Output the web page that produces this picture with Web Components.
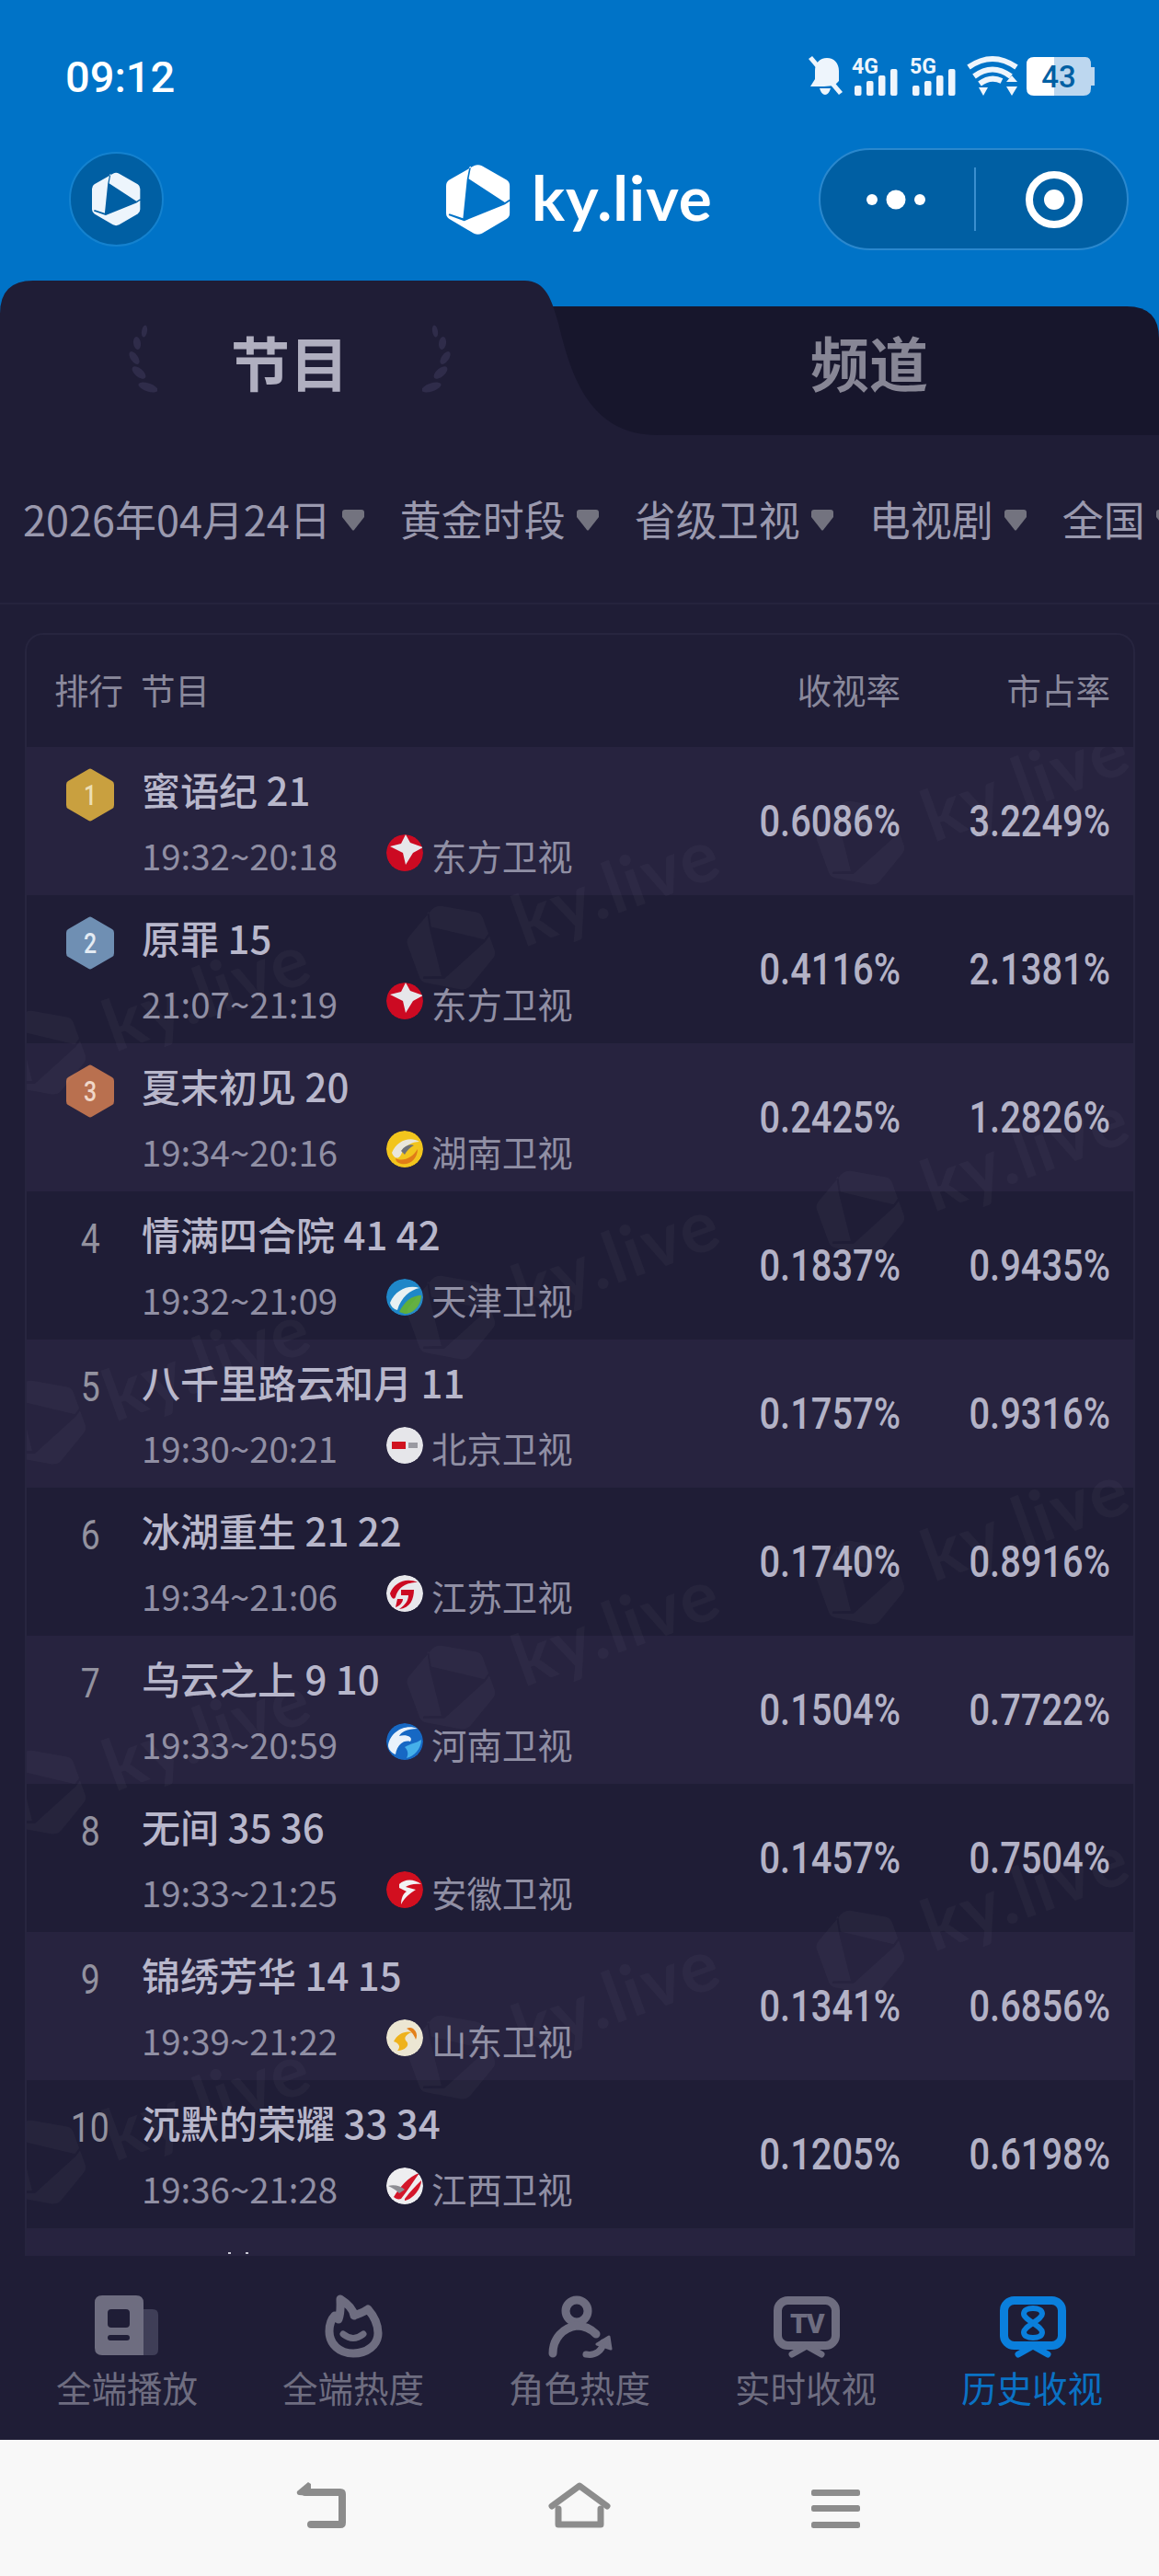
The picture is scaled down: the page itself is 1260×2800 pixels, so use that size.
<!DOCTYPE html>
<html lang="zh">
<head>
<meta charset="utf-8">
<title>ky.live</title>
<style>
  html, body { margin: 0; padding: 0; background: #1f1d36; }
  body { width: 1260px; height: 2800px; overflow: hidden; font-family: "Noto Sans CJK SC", "Noto Sans", sans-serif; }
  #app { display: flex; flex-direction: column; height: 2800px; }
  rating-table { flex: 1; min-height: 0; }
</style>
</head>
<body>
<div id="app">
  <app-header></app-header>
  <tab-switch></tab-switch>
  <filter-bar>
    <filter-chip>2026年04月24日</filter-chip>
    <filter-chip>黄金时段</filter-chip>
    <filter-chip>省级卫视</filter-chip>
    <filter-chip>电视剧</filter-chip>
    <filter-chip>全国</filter-chip>
  </filter-bar>
  <rating-table>
    <rating-row rank="1" logo="dongfang" time="19:32~20:18" channel="东方卫视" rate="0.6086%" share="3.2249%">蜜语纪 21</rating-row>
    <rating-row rank="2" logo="dongfang" time="21:07~21:19" channel="东方卫视" rate="0.4116%" share="2.1381%">原罪 15</rating-row>
    <rating-row rank="3" logo="hunan" time="19:34~20:16" channel="湖南卫视" rate="0.2425%" share="1.2826%">夏末初见 20</rating-row>
    <rating-row rank="4" logo="tianjin" time="19:32~21:09" channel="天津卫视" rate="0.1837%" share="0.9435%">情满四合院 41 42</rating-row>
    <rating-row rank="5" logo="beijing" time="19:30~20:21" channel="北京卫视" rate="0.1757%" share="0.9316%">八千里路云和月 11</rating-row>
    <rating-row rank="6" logo="jiangsu" time="19:34~21:06" channel="江苏卫视" rate="0.1740%" share="0.8916%">冰湖重生 21 22</rating-row>
    <rating-row rank="7" logo="henan" time="19:33~20:59" channel="河南卫视" rate="0.1504%" share="0.7722%">乌云之上 9 10</rating-row>
    <rating-row rank="8" logo="anhui" time="19:33~21:25" channel="安徽卫视" rate="0.1457%" share="0.7504%">无间 35 36</rating-row>
    <rating-row rank="9" logo="shandong" time="19:39~21:22" channel="山东卫视" rate="0.1341%" share="0.6856%">锦绣芳华 14 15</rating-row>
    <rating-row rank="10" logo="jiangxi" time="19:36~21:28" channel="江西卫视" rate="0.1205%" share="0.6198%">沉默的荣耀 33 34</rating-row>
    <rating-row blank></rating-row>
  </rating-table>
  <bottom-nav>
    <nav-item>
      <svg slot="icon" viewBox="0 0 80 72" width="80" height="72">
        <path fill="#3f3e57" d="M58 18H68Q74 18 74 24V62Q74 68 68 68H58Z"/>
        <path fill="#6e6d80" fill-rule="evenodd" d="M13 3H50Q58 3 58 11V68H13Q5 68 5 60V11Q5 3 13 3ZM23 18Q19 18 19 22V34Q19 38 23 38H39Q43 38 43 34V22Q43 18 39 18ZM22 46Q19 46 19 49T22 52H40Q43 52 43 49T40 46Z"/>
      </svg>
      全端播放
    </nav-item>
    <nav-item>
      <svg slot="icon" viewBox="0 0 80 72" width="80" height="72" fill="none" stroke="#6e6d80" stroke-linecap="round" stroke-linejoin="round">
        <path stroke-width="9" d="M26 7C34 12 40 18 41 25C46 23 52 21 56 18C63 26 67 34 67 44C67 57 55 66 40 66C25 66 14 56 14 42C14 34 17 28 20 25L24 29C27 21 26 13 26 7Z"/>
        <path stroke-width="7" d="M29 45Q40 54 51 45"/>
      </svg>
      全端热度
    </nav-item>
    <nav-item>
      <svg slot="icon" viewBox="0 0 80 72" width="80" height="72" fill="none" stroke="#6e6d80" stroke-linecap="round" stroke-linejoin="round" stroke-width="9">
        <circle cx="37" cy="20" r="12"/>
        <path d="M11 66C11 50 22 38 37 36C46 36 52 39 58 45"/>
        <path stroke-width="7" d="M47 67C57 69 65 63 66 54"/>
        <path fill="#6e6d80" stroke-width="3" d="M59 56L72 48L74 61Z"/>
      </svg>
      角色热度
    </nav-item>
    <nav-item>
      <svg slot="icon" viewBox="0 0 80 72" width="80" height="72" fill="none" stroke="#6e6d80" stroke-linejoin="round" stroke-width="9">
        <rect x="9.5" y="8.5" width="63" height="49" rx="11"/>
        <path stroke-width="7" stroke-linecap="round" d="M41 58L25 67M41 58L57 67"/>
        <text x="41" y="44" text-anchor="middle" font-family="Roboto" font-weight="900" font-size="30" letter-spacing="-1.5" fill="#6e6d80" stroke="none">TV</text>
      </svg>
      实时收视
    </nav-item>
    <nav-item active>
      <svg slot="icon" viewBox="0 0 80 72" width="80" height="72" fill="none" stroke="#0a7fdc" stroke-linejoin="round" stroke-width="9">
        <rect x="9.5" y="8.5" width="63" height="49" rx="11"/>
        <path stroke-width="7" stroke-linecap="round" d="M41 58L25 67M41 58L57 67"/>
        <path stroke-width="6" d="M41 33C35 29 31 26 31 23C31 19 35 17 41 17C47 17 51 19 51 23C51 26 47 29 41 33C35 37 31 40 31 43C31 47 35 49 41 49C47 49 51 47 51 43C51 40 47 37 41 33Z"/>
      </svg>
      历史收视
    </nav-item>
  </bottom-nav>
  <system-nav></system-nav>
</div>

<script>
// brand hexagon, 160x178 box, play triangle and slits cut out
const MARK = 'M69 5Q79 0 89 5L150 40Q158 45 158 55V122Q158 132 150 137L89 173Q79 178 69 173L8 137Q0 132 0 122V55Q0 45 8 40Z' +
  'M58 8L62 6L56 37L146 96L158 88V93L146 101L45 142L6 128L8 124L42 135L52 38Z';

class AppHeader extends HTMLElement {
  constructor() {
    super();
    this.attachShadow({ mode: 'open' });
    this.shadowRoot.innerHTML = `
      <style>
        :host { display: block; height: 305px; background: #0073c7; color: #fff; }
        .status { height: 161px; box-sizing: border-box; padding: 58px 70px 0 71px; display: flex; justify-content: space-between; align-items: flex-start; }
        .time { font: 500 47px/52px Roboto, sans-serif; }
        .bar { display: grid; grid-template-columns: 103px 1fr 337px; align-items: center; padding: 0 33px 0 75px; height: 111px; }
        .round { width: 103px; height: 103px; box-sizing: border-box; border-radius: 50%; background: #005fa3; border: 2px solid #1482cf; display: flex; align-items: center; justify-content: center; }
        .brand { display: flex; align-items: center; gap: 23px; margin-left: 307px; }
        .brand span { font: 700 67.5px/80px Lato, sans-serif; letter-spacing: 1px; position: relative; top: -3px; }
        .capsule { height: 111px; box-sizing: border-box; border-radius: 56px; background: #005fa3; border: 2px solid #2a88ce; display: flex; align-items: center; }
        .capsule > div { display: flex; align-items: center; justify-content: center; }
        .capsule .more { width: 167px; box-sizing: border-box; padding-right: 3px; flex: none; }
        .capsule .target { flex: 1; padding-left: 6px; }
        .capsule i { width: 2px; height: 69px; background: #3a8fcf; flex: none; }
        svg { display: block; }
      </style>
      <div class="status">
        <div class="time">09:12</div>
        <svg width="320" height="48" viewBox="0 0 320 48">
          <g fill="#eef5fc">
            <path d="M29 5C21 5 16 11 16 19V28L11 36H26L37 35 42 30V19C42 11 37 5 29 5Z"/>
            <path d="M21 38H33Q31 45 27 45T21 38Z"/>
            <path d="M9 6L13 3 46 42 42 45Z"/>
            <text x="56" y="22" font-family="Roboto" font-weight="700" font-size="23">4G</text>
            <rect x="59" y="35" width="7.5" height="11" rx="2"/><rect x="72" y="30" width="7.5" height="16" rx="2"/><rect x="85" y="24" width="7.5" height="22" rx="2"/><rect x="98" y="17" width="7.5" height="29" rx="2"/>
            <text x="119" y="22" font-family="Roboto" font-weight="700" font-size="23">5G</text>
            <rect x="122" y="35" width="7.5" height="11" rx="2"/><rect x="135" y="30" width="7.5" height="16" rx="2"/><rect x="148" y="24" width="7.5" height="22" rx="2"/><rect x="161" y="17" width="7.5" height="29" rx="2"/>
            <path d="M194 37L204 37 199 46ZM224 31L230 24 236 31ZM224 36H236L230 46Z"/>
          </g>
          <g fill="none" stroke="#eef5fc" stroke-width="6">
            <path d="M183 15Q209 -3 235 15"/><path d="M189 25Q209 10 229 25"/><path d="M195 33Q207 24 219 30"/>
          </g>
          <path fill="#bdd7ef" d="M270 4H310Q316 4 316 12V38Q316 46 308 46H270ZM316 15H320V35H316Z"/>
          <path fill="#fff" d="M254 4H276V46H254Q246 46 246 38V12Q246 4 254 4Z"/>
          <text x="281" y="37" text-anchor="middle" font-family="Roboto" font-weight="500" font-size="33" fill="#005fa3">43</text>
        </svg>
      </div>
      <div class="bar">
        <div class="round"><svg width="53" height="59" viewBox="0 0 160 178"><path fill="#edf5fc" fill-rule="evenodd" d="${MARK}"/></svg></div>
        <div class="brand">
          <svg width="70" height="80" viewBox="0 0 160 178"><path fill="#fff" fill-rule="evenodd" d="${MARK}"/></svg>
          <span>ky.live</span>
        </div>
        <div class="capsule">
          <div class="more"><svg width="66" height="24" viewBox="0 0 66 24"><circle cx="7" cy="12" r="6" fill="#fff"/><circle cx="33" cy="12" r="10.5" fill="#fff"/><circle cx="59" cy="12" r="6" fill="#fff"/></svg></div>
          <i></i>
          <div class="target"><svg width="64" height="64" viewBox="0 0 64 64"><circle cx="32" cy="32" r="27" fill="none" stroke="#fff" stroke-width="8"/><circle cx="32" cy="32" r="11" fill="#fff"/></svg></div>
        </div>
      </div>`;
  }
}

class TabSwitch extends HTMLElement {
  constructor() {
    super();
    this.attachShadow({ mode: 'open' });
    const leaves = [[22, 7, 10, 3, 6.5], [14, 20, -8, 4, 7], [11, 36, -35, 4, 8], [16, 52, -50, 4.5, 9], [26, 68, -72, 4.5, 11]]
      .map(([x, y, r, a, b]) => `<ellipse cx="${x}" cy="${y}" rx="${a}" ry="${b}" transform="rotate(${r} ${x} ${y})"/>`).join('');
    this.shadowRoot.innerHTML = `
      <style>
        :host { display: block; height: 168px; background: #0073c7; position: relative; }
        .shape { position: absolute; left: 0; top: 0; }
        .tabs { position: relative; display: grid; grid-template-columns: 1fr 1fr; height: 100%; }
        .tab { display: flex; justify-content: center; align-items: center; gap: 80px; padding-top: 5px; font-size: 64px; line-height: 70px; font-weight: 700; color: #878695; }
        .on { color: #b0afc0; }
        .tab svg { flex: none; }
      </style>
      <svg class="shape" width="1260" height="168" viewBox="0 0 1260 168">
        <path fill="#17162c" d="M560 28H1225Q1260 28 1260 63V168H560Z"/>
        <path fill="#1f1d36" d="M0 168V36Q0 0 36 0H570C594 0 600 22 607 46C622 110 644 168 716 168Z"/>
      </svg>
      <div class="tabs">
        <div class="tab on">
          <svg width="36" height="78" viewBox="0 0 36 78" fill="#2f2c4a">${leaves}</svg>
          <span>节目</span>
          <svg width="36" height="78" viewBox="0 0 36 78" fill="#2f2c4a" style="transform:scaleX(-1)">${leaves}</svg>
        </div>
        <div class="tab">频道</div>
      </div>`;
  }
}

class FilterBar extends HTMLElement {
  constructor() {
    super();
    this.attachShadow({ mode: 'open' });
    this.shadowRoot.innerHTML = `
      <style>
        :host { display: flex; gap: 39px; align-items: center; height: 184px; box-sizing: border-box; padding: 0 0 0 25px; overflow: hidden; border-bottom: 2px solid #25233d; white-space: nowrap; }
      </style>
      <slot></slot>`;
  }
}

class FilterChip extends HTMLElement {
  constructor() {
    super();
    this.attachShadow({ mode: 'open' });
    this.shadowRoot.innerHTML = `
      <style>
        :host { display: inline-flex; flex: none; align-items: center; gap: 12px; font-size: 45px; line-height: 60px; color: #9a99ae; }
        svg { display: block; margin-top: 2px; }
      </style>
      <slot></slot>
      <svg width="24" height="23" viewBox="0 0 24 23"><path fill="#73737f" d="M3 0H21Q24 0 24 3V8L13 22Q12 23 11 22L0 8V3Q0 0 3 0Z"/></svg>`;
  }
}

class RatingTable extends HTMLElement {
  constructor() {
    super();
    this.attachShadow({ mode: 'open' });
    this.shadowRoot.innerHTML = `
      <style>
        :host { display: block; overflow: hidden; box-sizing: border-box; padding: 31px 26px 0 27px; }
        .card { border: 2px solid #27253f; border-bottom: 0; border-radius: 20px 20px 0 0; }
        .head { display: grid; grid-template-columns: 1fr 220px 228px; align-items: center; height: 122px; box-sizing: border-box; padding: 0 25px 6px 30px; font-size: 37.5px; color: #8a899c; }
        .head > div { text-align: right; }
        .head > div:first-child { text-align: left; display: flex; gap: 19px; }
        .rows { position: relative; overflow: hidden; }
        .wm { position: absolute; left: 0; top: 0; pointer-events: none; }
      </style>
      <div class="card">
        <div class="head">
          <div><span>排行</span><span>节目</span></div>
          <div>收视率</div>
          <div>市占率</div>
        </div>
        <div class="rows">
          <slot></slot>
          <svg class="wm" width="1205" height="1680" viewBox="0 0 1205 1680"></svg>
        </div>
      </div>`;
  }

  connectedCallback() {
    // watermark lattice, coordinates are relative to the rows box
    const wm = this.shadowRoot.querySelector('.wm');
    let out = '';
    for (let i = 0; i < 3; i++) {
      for (let j = -1; j < 6; j++) {
        const cx = 46 + i * 445 - 29;
        const cy = 1146 - i * 114 + j * 402 - 814;
        if (cy < 0 || cy > 1660) continue;
        out += `<g transform="translate(${cx} ${cy}) rotate(-20)" fill="#fff" fill-opacity=".03">
          <path fill-rule="evenodd" transform="translate(-44 -49) scale(.55)" d="${MARK}"/>
          <text x="74" y="27" font-family="Lato" font-weight="700" font-size="78" letter-spacing="2">ky.live</text>
        </g>`;
      }
    }
    wm.innerHTML = out;
  }
}

const CHANNEL_LOGOS = {
  dongfang: '<circle cx="20" cy="20" r="20" fill="#cc0a22"/><path fill="#e6e6ea" d="M4 13L16 10 21 0 26 9 40 14 29 20 21 33 18 20Z"/>',
  hunan: '<circle cx="20" cy="20" r="20" fill="#f2c51d"/><path fill="#e9e6dc" d="M6 24C12 10 26 6 36 12C28 12 20 16 16 26C13 32 8 30 6 24Z"/><path fill="#e07c18" d="M10 30C18 34 28 30 34 20C34 30 26 38 16 36C12 35 10 33 10 30Z"/><path fill="#6e7178" d="M16 22C20 16 26 14 30 16C26 18 22 22 20 26Z"/>',
  tianjin: '<circle cx="20" cy="20" r="20" fill="#1f87c8"/><path fill="#e8f0f2" d="M4 26C10 12 24 6 36 10C26 12 16 20 12 34C8 33 5 30 4 26Z"/><path fill="#5fae3c" d="M14 36C20 24 28 18 38 18C38 28 30 38 20 38Z"/>',
  beijing: '<circle cx="20" cy="20" r="20" fill="#e6e6ea"/><rect x="6" y="16" width="15" height="8" fill="#d0121f"/><rect x="24" y="17" width="10" height="6" fill="#9a9aa2"/>',
  jiangsu: '<circle cx="20" cy="20" r="20" fill="#e8e8ec"/><path fill="#cc0a22" d="M4 20C8 8 22 2 34 8C26 8 14 10 10 24C8 28 5 24 4 20ZM16 16H30C30 26 26 36 14 37C22 32 24 26 24 22H16ZM12 26L18 26C18 30 14 34 10 35Z"/>',
  henan: '<circle cx="20" cy="20" r="20" fill="#1668c4"/><path fill="#e9f2fb" d="M2 24C4 10 20 0 34 6C22 6 16 10 14 14C20 12 30 14 26 20C20 18 12 22 10 34C5 32 2 28 2 24Z"/><path fill="#45b0ea" d="M20 26C26 22 32 22 38 18C38 28 30 36 22 38C24 34 24 30 20 26Z"/>',
  anhui: '<circle cx="20" cy="20" r="20" fill="#d20f1f"/><path fill="#f2f2f4" d="M14 14C20 8 30 8 38 14C30 13 24 15 21 17L32 20C26 24 20 28 16 36C16 30 18 24 22 22L14 18Z"/>',
  shandong: '<circle cx="20" cy="20" r="20" fill="#ece6d2"/><path fill="#eeb21c" d="M8 24C12 16 20 12 28 14C22 16 18 20 22 24C26 28 20 34 12 34C16 30 14 26 8 24Z"/><path fill="#e4801a" d="M22 10C28 6 36 14 32 22C30 16 26 12 22 10Z"/>',
  jiangxi: '<circle cx="20" cy="20" r="20" fill="#eeeef0"/><path fill="#d4172a" d="M8 32C14 22 24 10 36 6C30 14 24 24 16 34C13 35 10 34 8 32Z"/><path fill="#d4172a" d="M20 34C26 26 32 20 38 14C38 22 30 34 20 36Z"/><path fill="#8e8e94" d="M2 20C8 18 16 20 20 24L14 28C10 24 6 22 2 20Z"/>'
};

const MEDALS = { 1: ['#c9a03f', '#ecdfb4'], 2: ['#6f8fb3', '#e3ebf3'], 3: ['#b9704f', '#f0d7c8'] };

class ChannelLogo extends HTMLElement {
  constructor() {
    super();
    this.attachShadow({ mode: 'open' });
  }
  connectedCallback() {
    this.shadowRoot.innerHTML = `
      <style>:host { display: block; width: 40px; height: 40px; flex: none; } svg { display: block; }</style>
      <svg width="40" height="40" viewBox="0 0 40 40">
        <clipPath id="c"><circle cx="20" cy="20" r="20"/></clipPath>
        <g clip-path="url(#c)">${CHANNEL_LOGOS[this.getAttribute('name')] || ''}</g>
      </svg>`;
  }
}

class RatingRow extends HTMLElement {
  constructor() {
    super();
    this.attachShadow({ mode: 'open' });
  }
  connectedCallback() {
    if (this.hasAttribute('blank')) {
      this.shadowRoot.innerHTML = `
        <style>
          :host { display: block; height: 161px; background: #27233f; position: relative; }
          i { position: absolute; top: 26px; width: 3px; height: 2px; background: #c8c8d4; }
        </style>
        <i style="left:219px"></i><i style="left:238px"></i>`;
      return;
    }
    const rank = Number(this.getAttribute('rank'));
    const medal = MEDALS[rank];
    const left = medal
      ? `<svg width="52" height="58" viewBox="0 0 52 58">
           <path fill="${medal[0]}" d="M24 1.2Q26 0 28 1.2L50 14Q52 15 52 18V40Q52 43 50 44L28 56.8Q26 58 24 56.8L2 44Q0 43 0 40V18Q0 15 2 14Z"/>
           <text transform="translate(26 40) scale(.8 1)" text-anchor="middle" font-family="Roboto" font-weight="500" font-size="31" fill="${medal[1]}">${rank}</text>
         </svg>`
      : `<span class="num">${rank}</span>`;
    this.shadowRoot.innerHTML = `
      <style>
        :host { display: grid; grid-template-columns: 60px 1fr 220px 228px; height: 161px; box-sizing: border-box; padding: 0 25px 0 39px; background: #1f1d36; }
        :host(:nth-child(odd)) { background: #27233f; }
        .rank { height: 104px; display: flex; align-items: center; justify-content: center; }
        .num { font: 400 44px/58px Roboto, sans-serif; color: #93929f; transform: scaleX(.85); }
        .main { padding: 19px 0 0 26px; }
        .title { font-size: 42px; line-height: 54px; font-weight: 500; color: #b8b7cb; white-space: nowrap; }
        .sub { display: flex; align-items: center; margin-top: 17px; height: 54px; font-size: 38.4px; color: #908fa4; white-space: nowrap; }
        .time { width: 266px; flex: none; }
        channel-logo { margin: -4px 9px 0 0; }
        .val { display: flex; align-items: center; justify-content: flex-end; padding-top: 1px; font: 500 48px/1 Roboto, sans-serif; color: #b3b2c6; }
        .val span { transform: scaleX(.83); transform-origin: right center; }
      </style>
      <div class="rank">${left}</div>
      <div class="main">
        <div class="title"><slot></slot></div>
        <div class="sub">
          <span class="time">${this.getAttribute('time')}</span>
          <channel-logo name="${this.getAttribute('logo')}"></channel-logo>
          <span>${this.getAttribute('channel')}</span>
        </div>
      </div>
      <div class="val"><span>${this.getAttribute('rate')}</span></div>
      <div class="val"><span>${this.getAttribute('share')}</span></div>`;
  }
}

class BottomNav extends HTMLElement {
  constructor() {
    super();
    this.attachShadow({ mode: 'open' });
    this.shadowRoot.innerHTML = `
      <style>
        :host { display: grid; grid-template-columns: repeat(5, 246px); height: 200px; box-sizing: border-box; padding: 40px 15px 0; background: #1f1d36; position: relative; }
      </style>
      <slot></slot>`;
  }
}

class NavItem extends HTMLElement {
  constructor() {
    super();
    this.attachShadow({ mode: 'open' });
    this.shadowRoot.innerHTML = `
      <style>
        :host { display: flex; flex-direction: column; align-items: center; font-size: 38.5px; line-height: 50px; color: #6e6d80; }
        :host([active]) { color: #0a72c4; }
        .label { margin-top: 5px; }
        ::slotted(svg) { display: block; }
      </style>
      <slot name="icon"></slot>
      <div class="label"><slot></slot></div>`;
  }
}

class SystemNav extends HTMLElement {
  constructor() {
    super();
    this.attachShadow({ mode: 'open' });
    this.shadowRoot.innerHTML = `
      <style>
        :host { display: block; height: 148px; background: #f8f8f8; position: relative; }
        .row { display: grid; grid-template-columns: 56px 68px 53px; justify-content: start; column-gap: 218px; padding: 46px 0 0 322px; }
        svg { display: block; }
      </style>
      <div class="row">
        <svg width="56" height="50" viewBox="0 0 56 50" fill="none" stroke="#8c8c8c" stroke-width="8" stroke-linejoin="round" stroke-linecap="round">
          <path d="M10 11H48Q50 11 50 13V44Q50 46 48 46H16"/>
          <path fill="#8c8c8c" stroke="none" d="M13 0L16 2V15L3 14Q0 13 1 10Z"/>
        </svg>
        <svg width="68" height="50" viewBox="0 0 68 50" fill="none" stroke="#8c8c8c" stroke-width="7" stroke-linejoin="round" stroke-linecap="round">
          <path d="M4 26L34 4L64 26"/>
          <path d="M11 29V46H57V29"/>
        </svg>
        <svg width="53" height="50" viewBox="0 0 53 50" fill="#8c8c8c">
          <rect y="8" width="53" height="7" rx="2.5"/><rect y="25" width="53" height="7" rx="2.5"/><rect y="43" width="53" height="7" rx="2.5"/>
        </svg>
      </div>`;
  }
}

customElements.define('app-header', AppHeader);
customElements.define('tab-switch', TabSwitch);
customElements.define('filter-bar', FilterBar);
customElements.define('filter-chip', FilterChip);
customElements.define('rating-table', RatingTable);
customElements.define('channel-logo', ChannelLogo);
customElements.define('rating-row', RatingRow);
customElements.define('bottom-nav', BottomNav);
customElements.define('nav-item', NavItem);
customElements.define('system-nav', SystemNav);
</script>
</body>
</html>
